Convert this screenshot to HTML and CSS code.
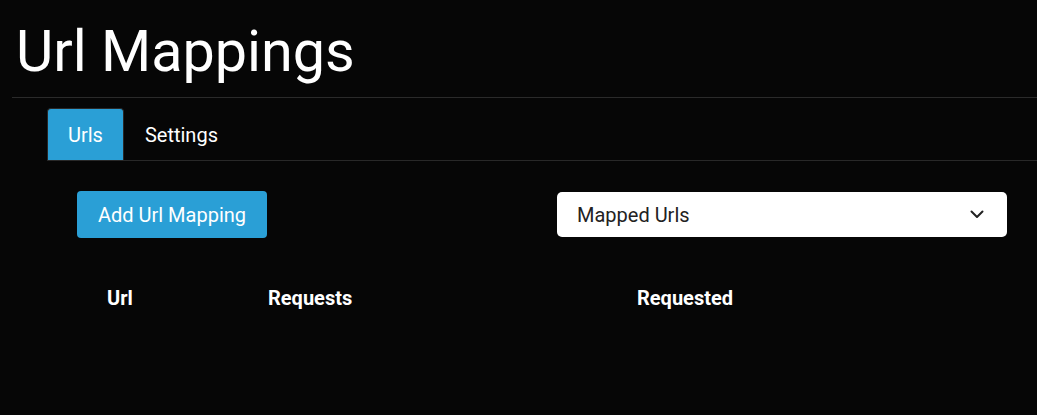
FILE: index.html
```html
<!DOCTYPE html>
<html lang="en">
<head>
<meta charset="utf-8">
<title>Url Mappings</title>
<link rel="stylesheet" href="styles.css">
</head>
<body>
<div class="page">
  <h1 class="title">Url Mappings</h1>
  <div class="content">
    <ul class="tabs">
      <li class="tab active">Urls</li>
      <li class="tab">Settings</li>
    </ul>
    <div class="panel">
      <div class="toolbar">
        <button class="btn">Add Url Mapping</button>
        <div class="select">
          <span>Mapped Urls</span>
          <svg class="chev" width="14" height="9" viewBox="0 0 14 9"><path d="M1.5 1.5 L7 7 L12.5 1.5" fill="none" stroke="#222" stroke-width="2" stroke-linecap="round" stroke-linejoin="round"/></svg>
        </div>
      </div>
      <table class="grid">
        <thead>
          <tr>
            <th class="c1">Url</th>
            <th class="c2">Requests</th>
            <th class="c3">Requested</th>
          </tr>
        </thead>
        <tbody></tbody>
      </table>
    </div>
  </div>
</div>
</body>
</html>
```

FILE: styles.css
```css
html, body {
  margin: 0;
  padding: 0;
  background: #060606;
  color: #fff;
  font-family: Roboto, "Noto Sans", sans-serif;
  font-size: 20px;
  line-height: 1.5;
}

.page {
  padding-left: 12px;
}

.title {
  margin: 17px 0 0 0;
  padding: 0 0 10px 4px;
  font-size: 57.5px;
  font-weight: 400;
  line-height: 70px;
  border-bottom: 1px solid #2a2a2a;
}

.content {
  padding-left: 35px;
}

.tabs {
  list-style: none;
  margin: 10px 0 0 0;
  padding: 0;
  display: flex;
  border-bottom: 1px solid #282828;
}

.tab {
  padding: 11px 20px 10px 20px;
  line-height: 30px;
  border: 1px solid transparent;
  border-bottom: 0;
  border-radius: 4px 4px 0 0;
  color: #fff;
}

.tab.active {
  background: #2a9fd6;
  border-color: #282828;
}

.panel {
  padding: 30px 30px 0 30px;
  width: 930px;
}

.toolbar {
  display: flex;
  justify-content: space-between;
  align-items: center;
}

.btn {
  font-family: inherit;
  font-size: 20px;
  line-height: 30px;
  color: #fff;
  background: #2a9fd6;
  border: 0;
  border-radius: 4px;
  padding: 0 20px;
  width: 190px;
  height: 47px;
}

.select {
  box-sizing: border-box;
  width: 450px;
  height: 45px;
  background: #fff;
  border-radius: 5px;
  color: #222;
  padding: 0 23px 0 20px;
  display: flex;
  align-items: center;
  justify-content: space-between;
}

.chev {
  display: block;
}

.grid {
  margin-top: 33px;
  border-collapse: collapse;
  width: 930px;
}

.grid th {
  text-align: left;
  font-weight: 700;
  padding: 12px 30px;
  line-height: 30px;
}

.grid .c1 { width: 101px; }
.grid .c2 { width: 309px; }
```
